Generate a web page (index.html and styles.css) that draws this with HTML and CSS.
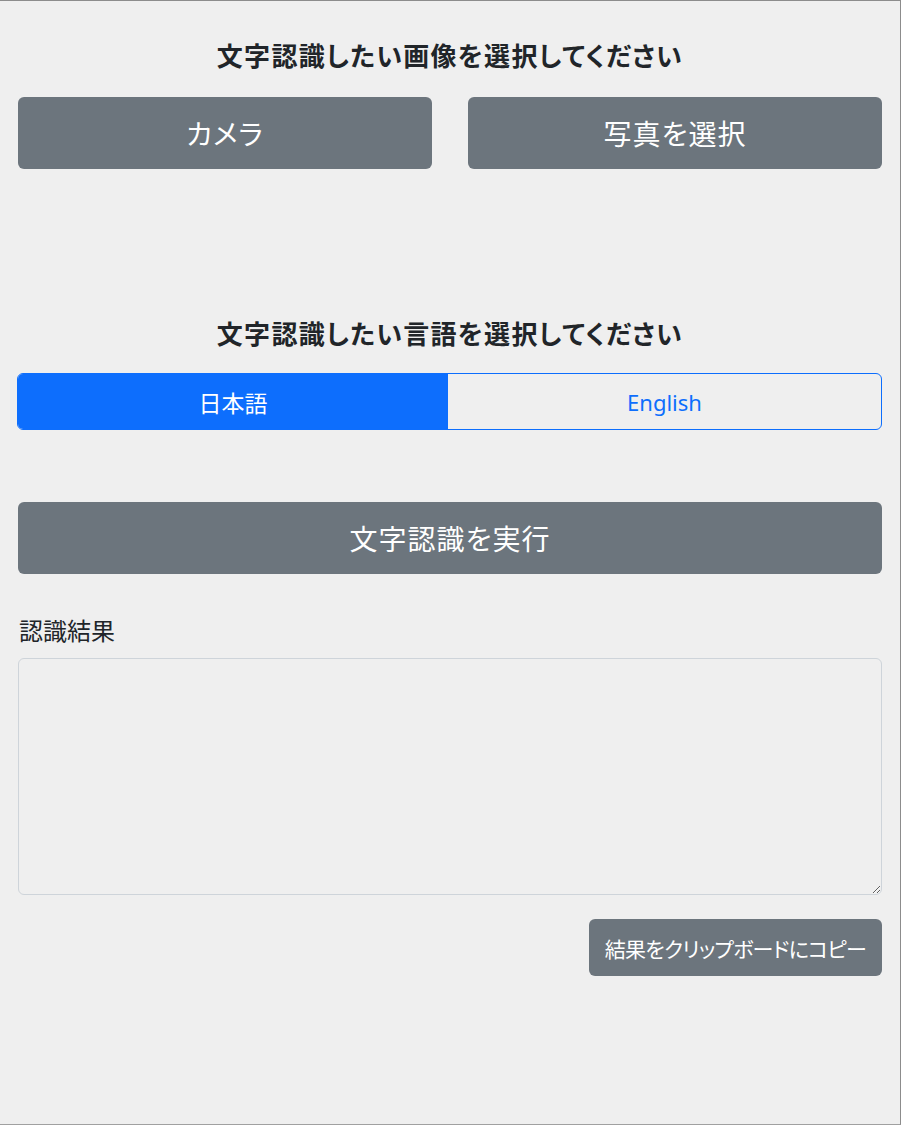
FILE: index.html
```html
<!DOCTYPE html>
<html lang="ja">
<head>
<meta charset="utf-8">
<link rel="stylesheet" href="styles.css">
</head>
<body>
<div class="frame">
  <main class="app">
    <h2 class="heading first">文字認識したい画像を選択してください</h2>
    <div class="pick-row">
      <button class="btn btn-secondary btn-xl">カメラ</button>
      <button class="btn btn-secondary btn-xl">写真を選択</button>
    </div>

    <h2 class="heading second">文字認識したい言語を選択してください</h2>
    <div class="lang-group">
      <button class="lang active">日本語</button>
      <button class="lang">English</button>
    </div>

    <button class="btn btn-secondary btn-xl run">文字認識を実行</button>

    <label class="result-label" for="result">認識結果</label>
    <textarea id="result" class="result"></textarea>

    <div class="copy-row">
      <button class="btn btn-secondary copy">結果をクリップボードにコピー</button>
    </div>
  </main>
</div>
</body>
</html>
```

FILE: styles.css
```css
html, body {
  margin: 0;
  padding: 0;
  background: #efefef;
}
body {
  font-family: "Noto Sans CJK JP", "Noto Sans", sans-serif;
  font-feature-settings: "palt";
  color: #212529;
}
.frame {
  box-sizing: border-box;
  width: 901px;
  height: 1125px;
  border-top: 1px solid #8c8c8c;
  border-right: 1px solid #8c8c8c;
  border-bottom: 1px solid #a0a0a0;
  background: #efefef;
}
.app {
  padding: 0 18px 0 18px;
  display: flex;
  flex-direction: column;
}
.heading {
  margin: 0;
  text-align: center;
  font-size: 26px;
  font-weight: 700;
  line-height: 31px;
  letter-spacing: 1.3px;
}
.heading.first { margin-top: 38px; }
.heading.second { margin-top: 148px; }

.btn {
  font-family: inherit;
  font-feature-settings: "palt";
  border: none;
  border-radius: 6px;
  cursor: pointer;
}
.btn-secondary {
  background: #6c757d;
  color: #fff;
}
.btn-xl {
  height: 72px;
  font-size: 28px;
  letter-spacing: 1px;
}
.pick-row {
  margin-top: 27px;
  display: grid;
  grid-template-columns: 1fr 1fr;
  gap: 36px;
}

.lang-group {
  margin: 25px 0 0 -1px;
  display: grid;
  grid-template-columns: 430px 1fr;
  height: 57px;
  border: 1px solid #0d6efd;
  border-radius: 6px;
  overflow: hidden;
  box-sizing: border-box;
}
.lang {
  border: none;
  background: transparent;
  color: #0d6efd;
  font-family: "Noto Sans", "Noto Sans CJK JP", sans-serif;
  font-size: 22px;
  padding: 0;
}
.lang.active {
  background: #0d6efd;
  color: #fff;
  font-family: "Noto Sans CJK JP", sans-serif;
  font-size: 23px;
}

.run { margin-top: 72px; }

.result-label {
  margin-top: 39px;
  font-size: 24px;
  line-height: 34px;
  padding-left: 1px;
}
.result {
  margin-top: 11px;
  box-sizing: border-box;
  height: 237px;
  width: 100%;
  border: 1px solid #ced4da;
  border-radius: 6px;
  background: #efefef;
  resize: vertical;
  font-family: inherit;
}
.copy-row {
  margin-top: 24px;
  display: flex;
  justify-content: flex-end;
}
.copy {
  height: 57px;
  width: 293px;
  font-size: 21px;
  letter-spacing: -0.7px;
  padding: 0;
}
```
